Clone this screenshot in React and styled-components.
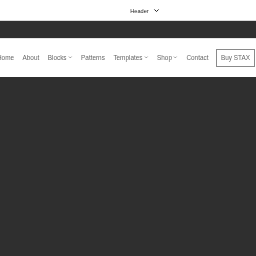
import React from "react"
import styled, { createGlobalStyle } from "styled-components"

const GlobalStyle = createGlobalStyle`
  html, body {
    margin: 0;
    padding: 0;
    background: #2f2f2f;
    font-family: "Liberation Sans", Arial, sans-serif;
  }
  #root {
    min-height: 100vh;
  }
`

const navItems = [
  { label: "Home" },
  { label: "About" },
  { label: "Blocks", menu: true },
  { label: "Patterns" },
  { label: "Templates", menu: true },
  { label: "Shop", menu: true },
  { label: "Contact" },
]

const Chevron = ({ size = 5 }) => (
  <svg width={size} height={size} viewBox="0 0 10 10" fill="none">
    <path d="M2 3.5 L5 6.5 L8 3.5" stroke="currentColor" strokeWidth="1.4" />
  </svg>
)

export default function App() {
  return (
    <>
      <GlobalStyle />
      <Page>
        <EditorBar>
          <TemplateName>
            Header
            <Chevron size={7} />
          </TemplateName>
        </EditorBar>
        <DarkBand />
        <NavBar>
          <NavList>
            {navItems.map((item) => (
              <NavItem key={item.label}>
                {item.label}
                {item.menu && <Chevron size={4.5} />}
              </NavItem>
            ))}
            <BuyButton>Buy STAX</BuyButton>
          </NavList>
        </NavBar>
      </Page>
    </>
  )
}

const Page = styled.div`
  display: flex;
  flex-direction: column;
  width: 100%;
  overflow: hidden;
  will-change: transform;
`

const EditorBar = styled.div`
  height: 21px;
  background: #fff;
  border-bottom: 1px solid #d8d8d8;
  display: flex;
  align-items: center;
  justify-content: center;
  box-sizing: border-box;
  padding-top: 1px;
`

const TemplateName = styled.div`
  display: flex;
  align-items: center;
  gap: 4px;
  margin-left: 34px;
  font-size: 5.6px;
  color: #1e1e1e;
`

const DarkBand = styled.div`
  height: 17px;
  background: #2f2f2f;
`

const NavBar = styled.div`
  height: 39px;
  background: #fff;
  border-top: 1px solid #e4e4e4;
  box-sizing: border-box;
  display: flex;
  align-items: center;
  justify-content: flex-end;
  overflow: hidden;
  padding-bottom: 1px;
`

const NavList = styled.nav`
  display: flex;
  align-items: center;
  justify-content: flex-end;
  gap: 8.5px;
  white-space: nowrap;
  padding-right: 1px;
  flex-shrink: 0;
`

const NavItem = styled.span`
  display: flex;
  align-items: center;
  gap: 1.5px;
  font-size: 6.4px;
  color: #666;
`

const BuyButton = styled.span`
  display: flex;
  align-items: center;
  justify-content: center;
  height: 18px;
  padding: 0 4px;
  margin-left: -1px;
  border: 1px solid #8a8a8a;
  font-size: 6.4px;
  color: #666;
  box-sizing: border-box;
`
